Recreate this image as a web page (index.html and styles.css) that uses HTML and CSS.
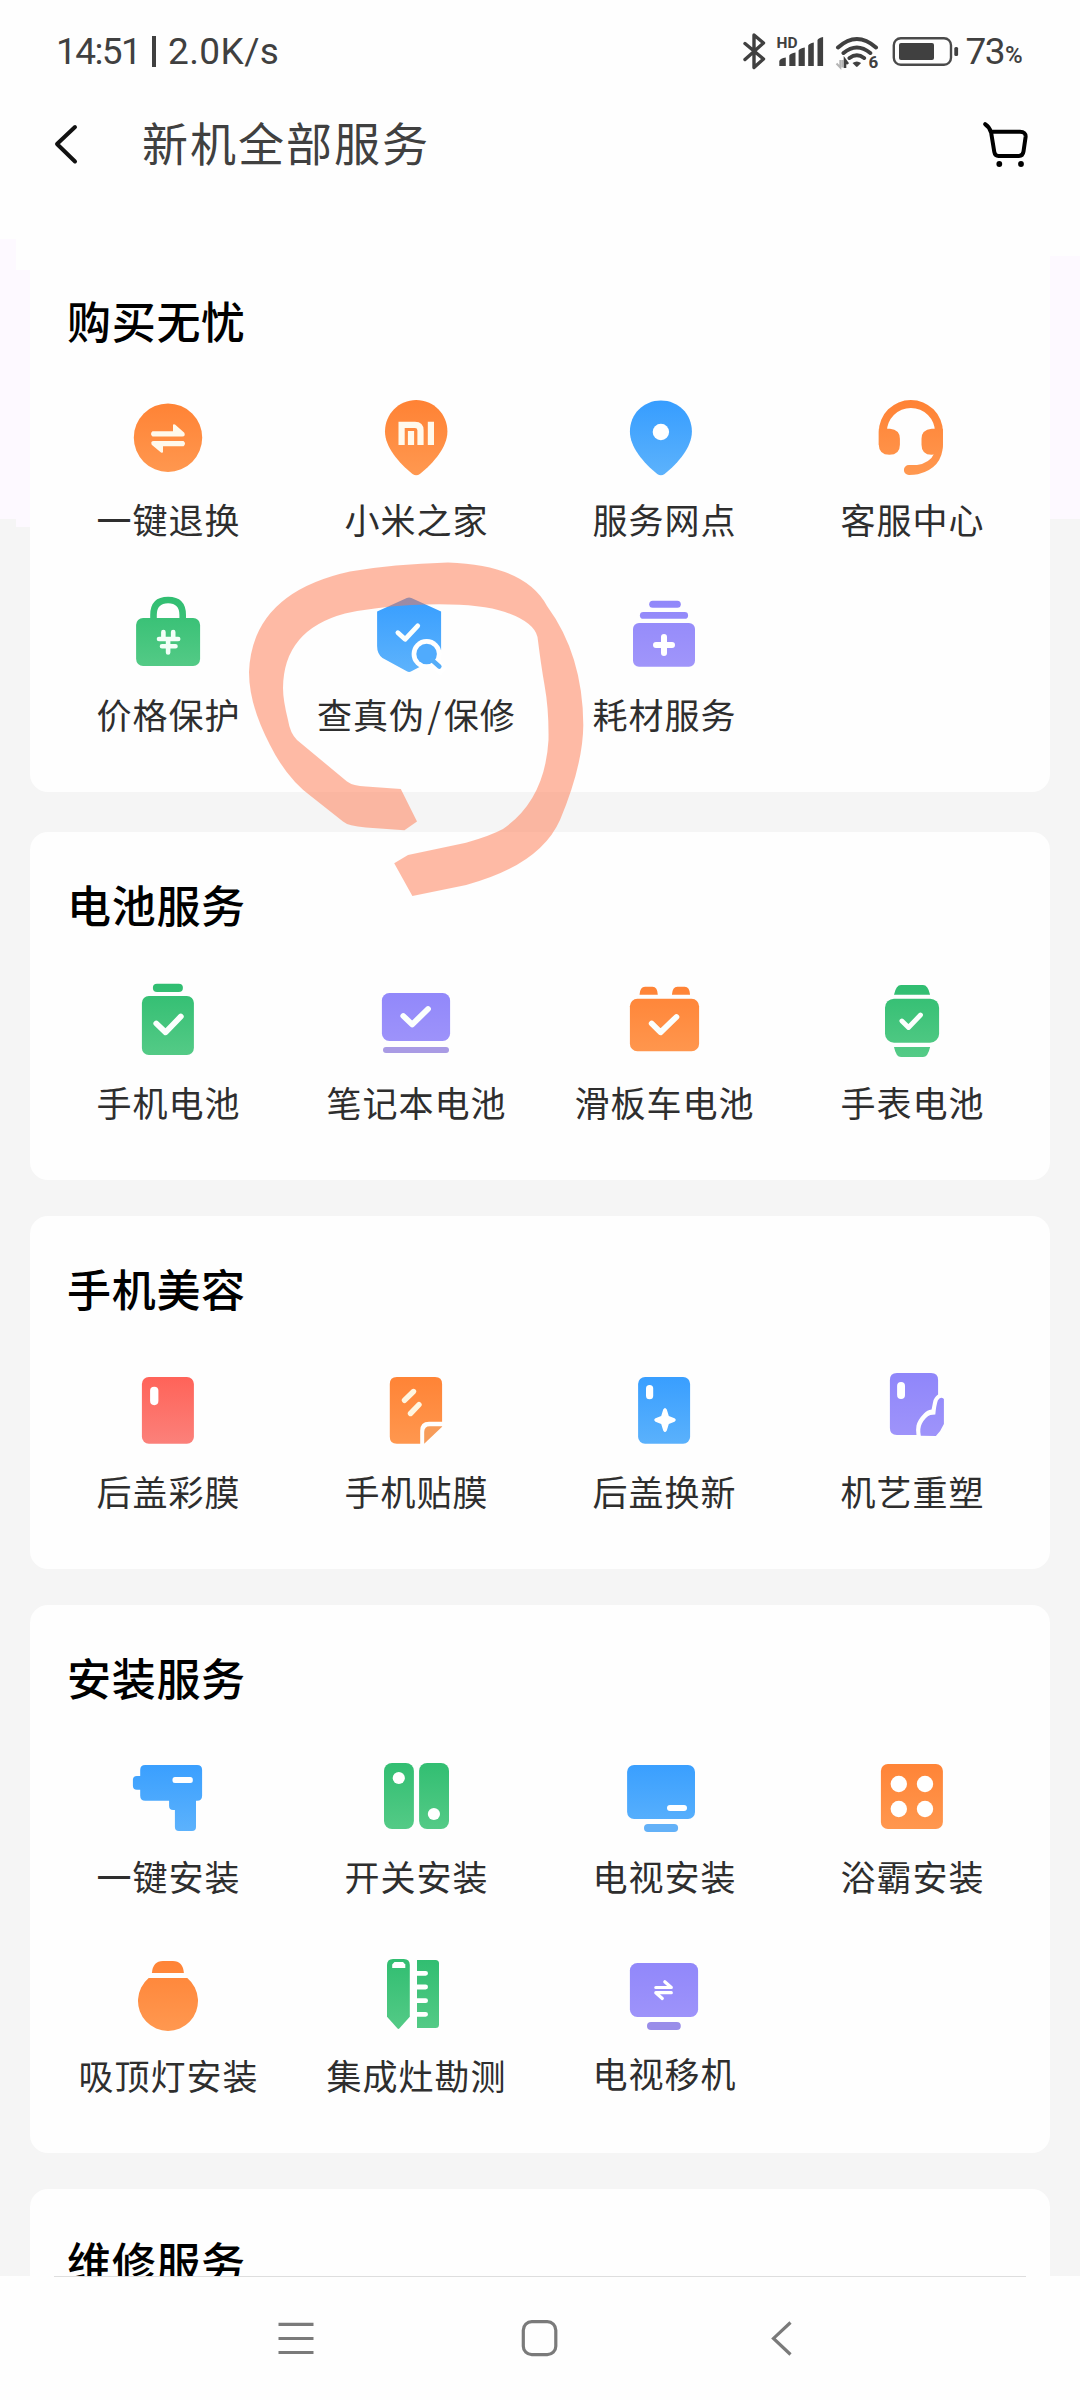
FILE: index.html
```html
<!DOCTYPE html>
<html lang="zh-CN">
<head>
<meta charset="utf-8">
<title>新机全部服务</title>
<link rel="stylesheet" href="styles.css">
</head>
<body>
<svg class="defs" width="0" height="0" aria-hidden="true">
  <defs>
    <linearGradient id="orange" gradientUnits="userSpaceOnUse" x1="45" y1="10" x2="45" y2="85"><stop offset="0" stop-color="#ff8234"/><stop offset="1" stop-color="#ff9850"/></linearGradient>
    <linearGradient id="blue" gradientUnits="userSpaceOnUse" x1="45" y1="10" x2="45" y2="85"><stop offset="0" stop-color="#369dff"/><stop offset="1" stop-color="#5cb2fc"/></linearGradient>
    <linearGradient id="green" gradientUnits="userSpaceOnUse" x1="45" y1="10" x2="45" y2="85"><stop offset="0" stop-color="#2fbd70"/><stop offset="1" stop-color="#55cb87"/></linearGradient>
    <linearGradient id="purple" gradientUnits="userSpaceOnUse" x1="45" y1="10" x2="45" y2="85"><stop offset="0" stop-color="#8f86fa"/><stop offset="1" stop-color="#a196fa"/></linearGradient>
    <linearGradient id="red" gradientUnits="userSpaceOnUse" x1="45" y1="10" x2="45" y2="85"><stop offset="0" stop-color="#ff6156"/><stop offset="1" stop-color="#fb827c"/></linearGradient>
  </defs>
</svg>
<div class="screen">
  <div class="status">
    <div class="status-left"><span class="clock">14:51</span><span class="bar"></span><span class="speed">2.0K/s</span></div>
    <div class="status-right">
      <svg class="status-icons" width="220" height="40" viewBox="0 0 220 40">
        <path class="line" d="M4 12.5 22.5 28 13 36.500V4L22.500 12 4 28.500" stroke-width="3.4"/>
        <text x="35.500" y="17" font-size="15.500" class="hd">HD</text>
        <path d="M38.300 35v-5q1-3 6.500-3.500V35zM48.300 35V24.500q1-2 6.200-3V35zM57.600 35V19.500q1-2 6.200-3V35zM67.200 35V14.500q1-2 5.600-3V35zM76.500 35V9q1-2 5.600-3V35z"/>
        <path class="line" d="M97 16.500Q115.800-.5 135 16.500M102.500 22q13.300-11 26.800 0M108.500 27q7.400-5.500 14.600 0" stroke-width="4"/>
        <path d="M111.500 32q4.300-3 8.600 0l-3.500 3.600q-.8.8-1.600 0z"/>
        <path d="M99.300 29v7.500l-3.800-4M101.500 36.500V29" fill="none" stroke="#b5b5b5" stroke-width="2"/>
        <path d="M104 37v-8l3 4" fill="none" stroke="#404040" stroke-width="2.600"/>
        <text x="127.500" y="37" font-size="17" class="hd">6</text>
        <rect x="152.800" y="7.200" width="57.200" height="26.600" rx="7" fill="none" stroke="#4a4a4a" stroke-width="2.400"/>
        <rect x="158" y="12" width="35" height="17" rx="2"/>
        <rect x="213.300" y="16" width="3.800" height="9" rx="1.500"/>
      </svg>
      <span class="pct">73</span><span class="pct-sign">%</span>
    </div>
  </div>
  <header class="header">
    <svg class="back" width="30" height="44" viewBox="0 0 30 44"><path d="M23 5 5 22l18 17.500"/></svg>
    <h1>新机全部服务</h1>
    <svg class="cart" width="50" height="50" viewBox="0 0 50 50"><path d="M4.200 5.200Q8.500 8 9.700 12.800H39Q45 12.800 44.600 18L42.500 32.500Q41.800 37 38 37H17.500Q14 37 13.300 33L10 12.800"/><circle cx="18.300" cy="45" r="2.900"/><circle cx="40" cy="45" r="2.900"/></svg>
  </header>
  <main class="content">
    <section class="card first">
      <h2>购买无忧</h2>
      <div class="grid">
        <div class="item"><svg class="icon" viewBox="0 0 90 90"><circle cx="45" cy="47.700" r="34.200" fill="url(#orange)"/><g fill="#fff9ec"><path d="M29.500 41.200H50V35.500q0-2 2-1l9.300 8.300q1.500 3.600-2 3.700H29.500q-3-2.600 0-5.300z"/><path d="M60.500 56.300H40v5.200q0 2-2 1l-9.300-7.800q-1.500-3.600 2-3.700H60.500q3 2.600 0 5.300z"/></g></svg><span>一键退换</span></div>
        <div class="item"><svg class="icon" viewBox="0 0 90 90"><path fill="url(#orange)" d="M45.200 10C27.800 10 14 24 14 41.500 14 57 27.500 72.500 41.500 84q3.700 2.600 7.400 0C63 72.500 76.400 57 76.400 41.500 76.400 24 62.600 10 45.200 10z"/><path d="M30.600 55V34.800H44q5.500 0 5.500 5.500V55M40 41v14M59.900 31.700V55" fill="none" stroke="#fff9ec" stroke-width="6.200"/></svg><span>小米之家</span></div>
        <div class="item"><svg class="icon" viewBox="0 0 90 90"><path fill="url(#blue)" d="M41.900 10.500C24.500 10.500 10.900 24 10.900 41.500 10.900 57 24.200 72.500 38.200 84q3.700 2.600 7.400 0C59.700 72.500 72.900 57 72.900 41.500 72.900 24 59.300 10.500 41.900 10.500z"/><circle cx="41.900" cy="42" r="8.200" fill="#fff"/></svg><span>服务网点</span></div>
        <div class="item"><svg class="icon" viewBox="0 0 90 90"><g fill="url(#orange)"><path d="M11.800 55V42a32 32 0 0 1 64.100 0v13h-7.900V42a24.100 24.100 0 0 0-48.200 0z"/><path d="M11.800 38.700H23q9.900 1 9.900 10v6q0 10-10.500 10t-10.600-10zM75.900 38.700H64.700q-10.200 1-10.200 10v6q0 10 10 10 11.400 0 11.400-10z"/><path d="M75.900 54q0 24-25 30.300-3.500.7-9 .7a5 5 0 0 1 0-10H50q13-2 17.500-12z"/></g></svg><span>客服中心</span></div>
        <div class="item"><svg class="icon" viewBox="0 0 90 90"><path d="M30.500 40V30q0-15 14.600-15t14.600 15v10" fill="none" stroke="url(#green)" stroke-width="6.600"/><rect x="13.100" y="33" width="64" height="48" rx="7" fill="url(#green)"/><path d="M36 54h19.200M39 61.300h13.500M45.100 55v12.500M40.400 47v6M50.200 47v6" fill="none" stroke="#f2fff8" stroke-width="4.600" stroke-linecap="round"/></svg><span>价格保护</span></div>
        <div class="item"><svg class="icon" viewBox="0 0 90 90"><path fill="url(#blue)" d="M35.800 13q2.300-1.200 4.600 0L70.100 26.500V65Q69 71 62 75L40.400 86.300q-2.300 1.200-4.600 0L11.500 73Q6.100 69 6.100 61V26.500z"/><circle cx="55.600" cy="69" r="15" fill="#fff"/><path d="M64 78l9 9" stroke="#fff" stroke-width="11"/><circle cx="55.600" cy="69" r="10.300" fill="#50abfd"/><path d="M61 75l7.300 6.500" stroke="#55adf8" stroke-width="4.600" stroke-linecap="round"/><path class="check thin" d="M26.900 47.700l7.200 6.600 12.600-13.500"/></svg><span>查真伪<b class="slash">/</b>保修</span></div>
        <div class="item"><svg class="icon" viewBox="0 0 90 90"><g fill="url(#purple)"><rect x="30.200" y="15.700" width="31.600" height="7" rx="3.500"/><rect x="20.900" y="27" width="48.200" height="6.800" rx="3.400"/><rect x="14" y="38" width="62" height="43.700" rx="6"/></g><path d="M37 60h16M45 52v16" stroke="#fff" stroke-width="6" stroke-linecap="round"/></svg><span>耗材服务</span></div>
      </div>
    </section>
    <section class="card">
      <h2>电池服务</h2>
      <div class="grid">
        <div class="item"><svg class="icon" viewBox="0 0 90 90"><g fill="url(#green)"><rect x="29.900" y="10.700" width="30" height="8.300" rx="4.100"/><rect x="18.900" y="23" width="52" height="59" rx="7"/></g><path class="check" d="M33.300 50.500l9.300 8.800 15.200-15.700"/></svg><span>手机电池</span></div>
        <div class="item"><svg class="icon" viewBox="0 0 90 90"><rect x="10.900" y="20" width="68.200" height="48" rx="7.500" fill="url(#purple)"/><rect x="12" y="74" width="66" height="6" rx="3" fill="#a99be4"/><path class="check" d="M32.300 43l8.900 8.500 15.800-15.500"/></svg><span>笔记本电池</span></div>
        <div class="item"><svg class="icon" viewBox="0 0 90 90"><g fill="url(#orange)"><rect x="10.900" y="25.700" width="69.200" height="52.500" rx="7.500"/><path d="M20.500 21.700q.5-8 5.500-8h7.500q5 0 5.300 8zM52.900 21.700q.5-8 5.500-8h7.300q5 0 5.400 8z"/></g><path class="check" d="M32.700 50.500l8.800 8.800L57.400 44"/></svg><span>滑板车电池</span></div>
        <div class="item"><svg class="icon" viewBox="0 0 90 90"><g fill="url(#green)"><rect x="18" y="25.700" width="54.100" height="44" rx="9"/><path d="M27 21.700q2-9.700 7-9.700h22q5 0 7.100 9.700zM27 74q2 10 7 10h22q5 0 7.100-10z"/></g><path class="check thin" d="M34.900 48l6.600 6.500 12-12.500"/></svg><span>手表电池</span></div>
      </div>
    </section>
    <section class="card beauty">
      <h2>手机美容</h2>
      <div class="grid">
        <div class="item"><svg class="icon" viewBox="0 0 90 90"><rect x="18.900" y="15" width="52" height="66.700" rx="7" fill="url(#red)"/><rect x="27.100" y="24.700" width="8.300" height="18.500" rx="4.100" fill="#fff"/></svg><span>后盖彩膜</span></div>
        <div class="item"><svg class="icon" viewBox="0 0 90 90"><path fill="url(#orange)" d="M25.800 15h38.300q7 0 7 7v37.800H58q-8.800 0-8.800 9v12.900H25.800q-7 0-7-7V22q0-7 7-7z"/><path d="M53.200 81.700V70q0-5.700 5.700-5.700h12.200v.5z" fill="#f79c5a"/><path d="M33.500 38.300l9-8.800M39.500 51.500l8.500-8.800" stroke="#fff5e0" stroke-width="5.400" stroke-linecap="round"/></svg><span>手机贴膜</span></div>
        <div class="item"><svg class="icon" viewBox="0 0 90 90"><rect x="19.100" y="15" width="52" height="66.700" rx="7" fill="url(#blue)"/><rect x="27" y="23" width="7.200" height="14.300" rx="3.600" fill="#fff"/><path fill="#fff" d="M44.200 47.500q1.800-3 3.600 0l2 6.500 5.700 2.300q2.500 1.700 0 3.400L49.800 62l-2 6.500q-1.800 3-3.600 0l-2-6.500-5.700-2.300q-2.500-1.700 0-3.400l5.700-2.300z"/></svg><span>后盖换新</span></div>
        <div class="item"><svg class="icon" viewBox="0 0 90 90"><path fill="url(#purple)" d="M29.900 11h34.200q7 0 7 7v14.500q-4 2.500-5 7.500l-1.500 7.500q-4.600.5-7.600 4-6 6-7.500 12-.8 4 0 9.500H29.900q-7 0-7-7V18q0-7 7-7z"/><rect x="30.100" y="20" width="7.900" height="17" rx="3.900" fill="#fff"/><path fill="url(#purple)" d="M53.800 73.700q-1.500-7 1-12 3.500-6.500 8.500-8.700l5-.5q.8-9 2.500-14 2.500-4.500 6.100-1.500V62q-3 7-8 12z"/></svg><span>机艺重塑</span></div>
      </div>
    </section>
    <section class="card install">
      <h2>安装服务</h2>
      <div class="grid">
        <div class="item"><svg class="icon" viewBox="0 0 90 90"><path fill="url(#blue)" d="M22.200 18h51.900q5 0 5 5v25.700q0 5-5 5H73V80q0 4-4 4H56q-4.100 0-4.100-4V63h-1.800q-4 0-4-4v-5.300H22.200q-5 0-5-5v-6h-3.300q-4 0-4-4V33q0-4 4-4h3.300v-6q0-5 5-5z"/><rect x="49.500" y="30" width="20.300" height="6" rx="2.500" fill="#fff"/></svg><span>一键安装</span></div>
        <div class="item"><svg class="icon" viewBox="0 0 90 90"><g fill="url(#green)"><rect x="13" y="16" width="29.900" height="66" rx="8"/><rect x="48.100" y="16" width="29.900" height="66" rx="8"/></g><circle cx="27.800" cy="31" r="6.100" fill="#fff"/><circle cx="62.900" cy="67" r="6.100" fill="#fff"/></svg><span>开关安装</span></div>
        <div class="item"><svg class="icon" viewBox="0 0 90 90"><rect x="8.100" y="18" width="67.900" height="54" rx="7" fill="url(#blue)"/><rect x="48" y="58" width="20" height="6" rx="3" fill="#fff"/><rect x="25" y="77" width="34.100" height="8" rx="4" fill="#63b1f8"/></svg><span>电视安装</span></div>
        <div class="item"><svg class="icon" viewBox="0 0 90 90"><rect x="13.900" y="17" width="62" height="65" rx="7" fill="url(#orange)"/><g fill="#fff"><circle cx="31.800" cy="37" r="8.200"/><circle cx="58" cy="37" r="8.200"/><circle cx="31.800" cy="62" r="8.200"/><circle cx="58" cy="62" r="8.200"/></g></svg><span>浴霸安装</span></div>
        <div class="item"><svg class="icon" viewBox="0 0 90 90"><g fill="url(#orange)"><path d="M28.900 27q1-12 11-12h10q10 0 11 12z"/><path d="M25.700 32h38.600A30 30 0 1 1 25.700 32z"/></g></svg><span>吸顶灯安装</span></div>
        <div class="item"><svg class="icon" viewBox="0 0 90 90"><g fill="url(#green)"><path d="M22 13h10.800q6 0 6 6v51.700L28.500 82.300q-1.100 1.200-2.200 0L16 70.700V19q0-6 6-6z"/><path d="M46 14h18.500q3.500 0 3.500 3.500v61q0 3.500-3.500 3.500H46z"/></g><path d="M23.500 16h8.500l2.300 2.500V22H21.200v-3.500z" fill="#fff"/><path d="M45 27.300h9.600M45 41h9.600M45 54.700h9.600M45 68.300h9.600" stroke="#fff" stroke-width="4.800" stroke-linecap="round"/></svg><span>集成灶勘测</span></div>
        <div class="item"><svg class="icon" viewBox="0 0 90 90"><rect x="10.900" y="17" width="68.200" height="54" rx="7.500" fill="url(#purple)"/><rect x="28" y="76" width="33.800" height="8" rx="4" fill="#998de9"/><path d="M36.800 41.500h15.500l-6.500-5.800M52.300 46.700H36.800l6.500 5.800" fill="none" stroke="#fff" stroke-width="3.200" stroke-linecap="round" stroke-linejoin="round"/></svg><span class="raised">电视移机</span></div>
      </div>
    </section>
    <section class="card">
      <h2>维修服务</h2>
    </section>
  </main>
  <nav class="nav">
    <svg width="40" height="40" viewBox="0 0 40 40"><path d="M2.500 6.300h35M2.500 20.500h35M2.500 34.500h35"/></svg>
    <svg width="40" height="40" viewBox="0 0 40 40"><rect x="4.300" y="3.700" width="32.500" height="33" rx="8.500"/></svg>
    <svg width="40" height="40" viewBox="0 0 40 40"><path d="M28.500 4.500 11.500 20.400l17 16.100"/></svg>
  </nav>
  <svg class="marker" width="340" height="340" viewBox="247 560 340 340"><path d="M417 821.500 400.800 789 366 786.500Q353 786 347 781.500L297 740Q290 733 288 720 283 700 283 688 283.500 630 345 613.500 375 607 411.700 605 475 602 505 612 534 622 537.500 637 541 665 544.500 685 549 710 548.500 740 545 800 503 829 490 836 466 842.700L408 855 394.200 863.300 412.400 896 466.200 885Q540 865 560 820 583 765 583.300 725 583 655 547 606 525 565 448 562.500 393 564 350 571.500 252 593 249 672 249 705 270 745 287 779 312 797L343 821.500Q348 826 366 827.500L404.400 830.300z"/></svg>
</div>
</body>
</html>
```
FILE: styles.css
```css
* { box-sizing: border-box; }

body {
  margin: 0;
  font-family: "Noto Sans CJK SC", sans-serif;
}

.defs { position: absolute; }

/* White top area, a faint pink band on both sides, then the grey page */
.screen {
  position: relative;
  display: flex;
  flex-direction: column;
  width: 1080px;
  height: 2400px;
  overflow: hidden;
  background:
    linear-gradient(#fdf9ff, #fdf9ff) 0 239px / 16px 280px no-repeat,
    linear-gradient(#fdf9ff, #fdf9ff) 16px 270px / 14px 257px no-repeat,
    linear-gradient(#fdf9ff, #fdf9ff) 1050px 256px / 30px 263px no-repeat,
    linear-gradient(#fefefe 519px, #f5f5f5 519px);
}

.status {
  display: flex;
  justify-content: space-between;
  align-items: center;
  height: 102px;
  padding: 0 56px 0 56px;
  font-family: Roboto, sans-serif;
  font-size: 37px;
  color: #404040;
}

.status-left,
.status-right { display: flex; align-items: center; }

.clock { letter-spacing: -1.6px; width: 83px; white-space: nowrap; }
.bar { width: 4px; height: 31px; margin: 0 12px 0 13px; background: #404040; }
.speed { letter-spacing: 0.4px; }

.status-icons { fill: #404040; margin-right: 4px; }
.status-icons .line {
  fill: none;
  stroke: #404040;
  stroke-linecap: round;
  stroke-linejoin: round;
}
.hd { font-family: Roboto, sans-serif; font-weight: 700; }
.pct { letter-spacing: -1.5px; }
.pct-sign { font-size: 24px; font-weight: 500; margin: 8px 0 0 1px; width: 19px; }

.header {
  display: flex;
  align-items: center;
  height: 84px;
  padding: 0 49px 0 52px;
}
.header h1 {
  flex: 1;
  margin: -6px 0 0 60px;
  font-size: 46px;
  line-height: 60px;
  font-weight: 400;
  letter-spacing: 2px;
  color: #404040;
}
.back path { fill: none; stroke: #111; stroke-width: 4; stroke-linecap: round; stroke-linejoin: round; }
.cart path { fill: none; stroke: #000; stroke-width: 4; stroke-linecap: round; stroke-linejoin: round; }

.content {
  flex: 1;
  min-height: 0;
  overflow: hidden;
  padding: 53px 30px 0;
}

.card {
  margin-bottom: 36px;
  padding: 42px 14px 58px;
  border-radius: 18px;
  background: #fefefe;
}
.card.first {
  margin-bottom: 40px;
  padding-top: 51px;
  border-radius: 0 0 18px 18px;
}

.card h2 {
  margin: 0 0 39px 23px;
  font-size: 44px;
  line-height: 60px;
  font-weight: 500;
  letter-spacing: 0.7px;
  color: #000;
}
.first h2, .install h2 { margin-bottom: 40px; }
.beauty h2 { margin-bottom: 44px; }

.grid {
  display: grid;
  grid-template-columns: repeat(4, 248px);
  row-gap: 46px;
}
.install .grid { row-gap: 50px; }

.item {
  display: flex;
  flex-direction: column;
  align-items: center;
  gap: 19px;
  height: 149px;
}
.item span {
  font-size: 35px;
  line-height: 40px;
  letter-spacing: 1px;
  margin-right: -1px;
  white-space: nowrap;
  color: #2e2e2e;
}
.item .raised { margin-top: -2px; }
.slash { font-weight: 400; padding: 0 2px; }

.icon { display: block; width: 90px; height: 90px; }

.check {
  fill: none;
  stroke: #fbfffd;
  stroke-width: 5.8;
  stroke-linecap: round;
  stroke-linejoin: round;
}
.check.thin { stroke-width: 4.8; }

.nav {
  display: grid;
  grid-template-columns: 40px 40px 40px;
  column-gap: 203px;
  height: 124px;
  padding: 42px 0 0 276px;
  background:
    linear-gradient(#dedede, #dedede) 54px 0 / 972px 1px no-repeat,
    #fefefe;
}
.nav svg { fill: none; stroke: #7a7a7a; stroke-width: 3.2; }

.marker {
  position: absolute;
  left: 247px;
  top: 560px;
  fill: #ff794f;
  opacity: 0.5;
}
```
